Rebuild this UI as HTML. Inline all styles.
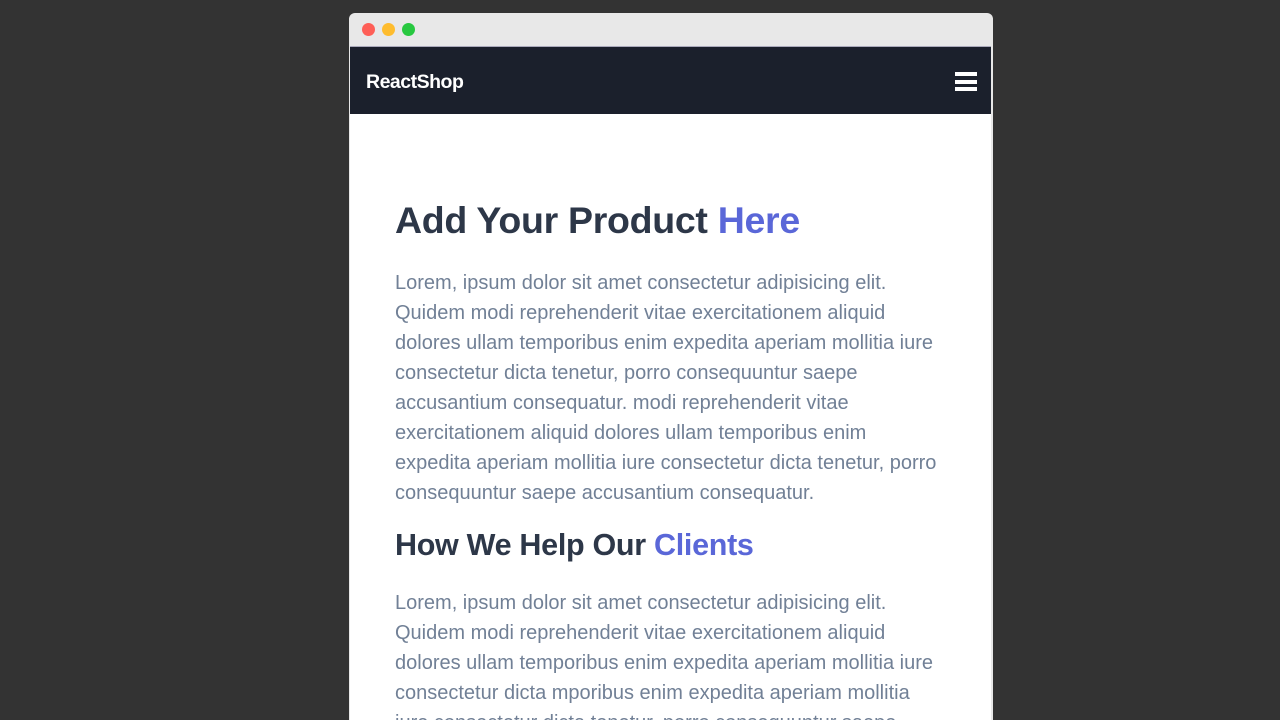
<!DOCTYPE html>
<html><head><meta charset="utf-8"><style>
html,body{margin:0;width:1280px;height:720px;overflow:hidden}
body{background:#333333;font-family:"Liberation Sans",sans-serif;position:relative}
.win{position:absolute;left:349px;top:13px;width:644px;height:707px;background:#e8e8e8;border-radius:6px 6px 0 0;overflow:hidden}
.dot{position:absolute;top:10px;width:13px;height:13px;border-radius:50%}
.nav{position:absolute;left:1px;top:33px;width:641px;height:67px;background:#1b202c;border-top:1px solid #aab}
.logo{position:absolute;left:16px;top:24px;color:#fff;font-weight:bold;font-size:19.5px;letter-spacing:-0.5px}
.ham{position:absolute;right:14px;top:25px;width:22px}
.ham i{display:block;height:4px;background:#fff;margin-bottom:3.5px}
.content{position:absolute;left:1px;top:101px;width:641px;height:620px;background:#fff}
h1,h2{position:absolute;left:45px;margin:0;color:#2d3748;font-weight:bold;white-space:nowrap}
h1{top:85px;font-size:37.5px;letter-spacing:-0.3px}
h2{top:414px;font-size:30.5px;letter-spacing:-0.3px}
span.b{color:#5a67d8}
p{position:absolute;left:45px;margin:0;color:#718096;font-size:20px;line-height:30px;white-space:nowrap}
</style></head><body>
<div class="win">
<div class="dot" style="left:13px;background:#fe5f57"></div>
<div class="dot" style="left:33px;background:#febc2e"></div>
<div class="dot" style="left:53px;background:#28c840"></div>
<div class="nav"><div class="logo">ReactShop</div><div class="ham"><i></i><i></i><i></i></div></div>
<div class="content">
<h1>Add Your Product <span class="b">Here</span></h1>
<p style="top:154px">Lorem, ipsum dolor sit amet consectetur adipisicing elit.<br>Quidem modi reprehenderit vitae exercitationem aliquid<br>dolores ullam temporibus enim expedita aperiam mollitia iure<br>consectetur dicta tenetur, porro consequuntur saepe<br>accusantium consequatur. modi reprehenderit vitae<br>exercitationem aliquid dolores ullam temporibus enim<br>expedita aperiam mollitia iure consectetur dicta tenetur, porro<br>consequuntur saepe accusantium consequatur.</p>
<h2>How We Help Our <span class="b">Clients</span></h2>
<p style="top:474px">Lorem, ipsum dolor sit amet consectetur adipisicing elit.<br>Quidem modi reprehenderit vitae exercitationem aliquid<br>dolores ullam temporibus enim expedita aperiam mollitia iure<br>consectetur dicta mporibus enim expedita aperiam mollitia<br>iure consectetur dicta tenetur, porro consequuntur saepe</p>
</div>
</div>
</body></html>
